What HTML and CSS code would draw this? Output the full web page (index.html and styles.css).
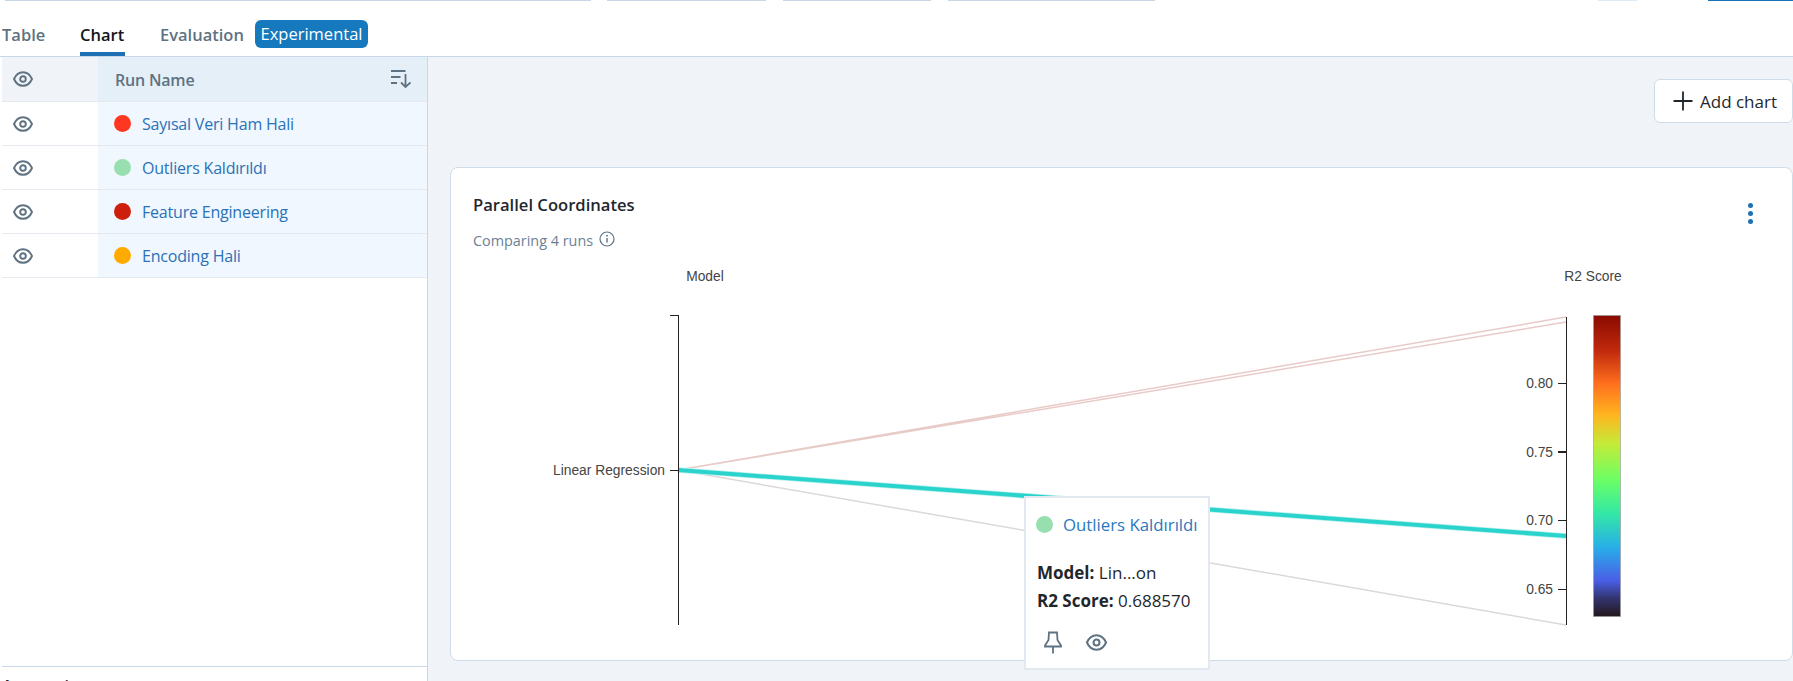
FILE: index.html
```html
<!DOCTYPE html>
<html lang="en">
<head>
    <meta charset="UTF-8">
    <meta name="viewport" content="width=device-width, initial-scale=1.0">
    <title>Chart</title>
    <link rel="stylesheet" href="styles.css">
</head>
<body>
    <svg width="0" height="0" class="defs">
        <symbol id="eye" viewBox="0 0 20 16">
            <path d="M1 8C3 3.500 6.500 1.200 10 1.200S17 3.500 19 8C17 12.500 13.500 14.800 10 14.800S3 12.500 1 8Z" fill="none" stroke="currentColor" stroke-width="1.900"/>
            <circle cx="10" cy="8" r="2.800" fill="none" stroke="currentColor" stroke-width="1.900"/>
        </symbol>
    </svg>

    <div class="strip">
        <span class="strip-seg seg-a"></span>
        <span class="strip-seg seg-b"></span>
        <span class="strip-seg seg-c"></span>
        <span class="strip-seg seg-d"></span>
        <span class="strip-seg seg-e"></span>
        <span class="strip-seg seg-f"></span>
    </div>

    <div class="tabs">
        <div class="tab tab-table">Table</div>
        <div class="tab tab-active">Chart</div>
        <div class="tab tab-eval">Evaluation</div>
        <div class="tab-pill">Experimental</div>
    </div>

    <div class="main">
        <div class="runs">
            <div class="runs-list">
                <div class="run-row run-head">
                    <div class="run-eye"><svg class="eye-icon"><use href="#eye"/></svg></div>
                    <div class="run-name">
                        <span class="run-head-label">Run Name</span>
                        <svg class="sort-icon" width="20" height="18" viewBox="0 0 20 18">
                            <path d="M0 1H14.500M0 7H9.500M0 13H6M14.500 4V17M10 12.500L14.500 17L19.500 12.500" fill="none" stroke="currentColor" stroke-width="1.800"/>
                        </svg>
                    </div>
                </div>
                <div class="run-row">
                    <div class="run-eye"><svg class="eye-icon"><use href="#eye"/></svg></div>
                    <div class="run-name"><span class="dot dot-red"></span><a class="run-link">Sayısal Veri Ham Hali</a></div>
                </div>
                <div class="run-row">
                    <div class="run-eye"><svg class="eye-icon"><use href="#eye"/></svg></div>
                    <div class="run-name"><span class="dot dot-green"></span><a class="run-link">Outliers Kaldırıldı</a></div>
                </div>
                <div class="run-row">
                    <div class="run-eye"><svg class="eye-icon"><use href="#eye"/></svg></div>
                    <div class="run-name"><span class="dot dot-darkred"></span><a class="run-link">Feature Engineering</a></div>
                </div>
                <div class="run-row">
                    <div class="run-eye"><svg class="eye-icon"><use href="#eye"/></svg></div>
                    <div class="run-name"><span class="dot dot-orange"></span><a class="run-link">Encoding Hali</a></div>
                </div>
            </div>
            <div class="runs-foot">Annotations</div>
        </div>

        <div class="charts">
            <div class="charts-bar">
                <button class="add-chart">
                    <svg width="20" height="20" viewBox="0 0 20 20"><path d="M10 0.500V19.500M0.500 10H19.500" stroke="currentColor" stroke-width="1.800"/></svg>
                    Add chart
                </button>
            </div>

            <div class="card">
                <div class="card-head">
                    <div>
                        <div class="card-title">Parallel Coordinates</div>
                        <div class="card-sub">
                            Comparing 4 runs
                            <svg width="16" height="16" viewBox="0 0 16 16" class="info-icon">
                                <circle cx="8" cy="8" r="7" fill="none" stroke="currentColor" stroke-width="1.200"/>
                                <path d="M8 7V11.500" stroke="currentColor" stroke-width="1.400"/>
                                <circle cx="8" cy="4.700" r="0.900" fill="currentColor"/>
                            </svg>
                        </div>
                    </div>
                    <div class="card-menu"><span></span><span></span><span></span></div>
                </div>

                <!-- viewBox uses page coordinates so the plot numbers are easy to check -->
                <svg class="plot" width="1341" height="400" viewBox="451 261 1341 400">
                    <defs>
                        <linearGradient id="turbo" x1="0" y1="0" x2="0" y2="1">
                            <stop offset="0" stop-color="#8a0b00"/>
                            <stop offset="0.116" stop-color="#c0290d"/>
                            <stop offset="0.226" stop-color="#ff6f1f"/>
                            <stop offset="0.33" stop-color="#ffb51f"/>
                            <stop offset="0.425" stop-color="#c5ea38"/>
                            <stop offset="0.547" stop-color="#6bff66"/>
                            <stop offset="0.657" stop-color="#33e8a5"/>
                            <stop offset="0.77" stop-color="#28aee8"/>
                            <stop offset="0.88" stop-color="#4a5fe6"/>
                            <stop offset="0.94" stop-color="#32346f"/>
                            <stop offset="1" stop-color="#23171b"/>
                        </linearGradient>
                    </defs>

                    <text class="axis-title" x="705" y="281" text-anchor="middle">Model</text>
                    <text class="axis-title" x="1593" y="281" text-anchor="middle">R2 Score</text>

                    <path d="M678 470L1566 317M678 470L1566 322" class="line-pink"/>
                    <path d="M678 470L1566 625" class="line-grey"/>
                    <path d="M678 470L1566 536" class="line-teal-halo"/>
                    <path d="M678 470L1566 536" class="line-teal"/>

                    <path d="M678.500 315V625M670 315.500H678M670 470.500H678" class="axis"/>
                    <path d="M1566.500 317V625M1558 383.500H1566M1558 520.500H1566M1558 589.500H1566" class="axis"/>
                    <path d="M1558 452H1566" class="axis axis-bold"/>

                    <text class="tick" x="665" y="475" text-anchor="end">Linear Regression</text>
                    <text class="tick" x="1553" y="388" text-anchor="end">0.80</text>
                    <text class="tick" x="1553" y="457" text-anchor="end">0.75</text>
                    <text class="tick" x="1553" y="525" text-anchor="end">0.70</text>
                    <text class="tick" x="1553" y="594" text-anchor="end">0.65</text>

                    <rect x="1593.500" y="315.500" width="27" height="301" fill="url(#turbo)" stroke="#999" stroke-opacity="0.6"/>
                </svg>

                <div class="tooltip">
                    <div class="tooltip-run"><span class="dot dot-green"></span><a class="tooltip-link">Outliers Kaldırıldı</a></div>
                    <div class="tooltip-line"><b>Model:</b> Lin...on</div>
                    <div class="tooltip-line"><b>R2 Score:</b> 0.688570</div>
                    <div class="tooltip-icons">
                        <svg width="18" height="23" viewBox="0 0 18 23">
                            <path d="M5 1.500H13L13.500 9L17 14.500V15.500H1V14.500L4.500 9ZM9 15.500V22.500" fill="none" stroke="currentColor" stroke-width="1.800"/>
                        </svg>
                        <svg class="eye-big"><use href="#eye"/></svg>
                    </div>
                </div>
            </div>
        </div>
    </div>
</body>
</html>
```

FILE: styles.css
```css
* {
    box-sizing: border-box;
}

html, body {
    margin: 0;
    height: 681px;
    overflow: hidden;
}

body {
    display: flex;
    flex-direction: column;
    background-color: white;
    color: #1f272d;
    font-family: "Open Sans", "Noto Sans", sans-serif;
    font-size: 16px;
}

.defs {
    position: absolute;
}

/* bottom edge of the toolbar scrolled away above */
.strip {
    display: flex;
    height: 1px;
    flex-shrink: 0;
}

.strip-seg {
    display: block;
    background-color: #c8d8e6;
}

.seg-a { margin-left: 5px; width: 586px; }
.seg-b { margin-left: 16px; width: 159px; }
.seg-c { margin-left: 17px; width: 148px; }
.seg-d { margin-left: 17px; width: 207px; }
.seg-e { margin-left: 443px; width: 39px; background-color: #dcebf8; }
.seg-f { margin-left: 71px; width: 85px; background-color: #1a72b8; }

.tabs {
    display: flex;
    align-items: flex-end;
    height: 56px;
    flex-shrink: 0;
    padding-left: 2px;
    border-bottom: 1px solid #c8d8e6;
    font-size: 16.500px;
}

.tab {
    height: 33px;
    line-height: 24px;
    padding-bottom: 5px;
    border-bottom: 4px solid transparent;
    color: #5f7282;
    font-weight: 600;
    white-space: nowrap;
}

.tab-table { width: 42px; margin-right: 36px; }
.tab-eval { width: 84px; margin-right: 11px; }

.tab-active {
    width: 45px;
    margin-right: 35px;
    color: #11171c;
    border-bottom-color: #1f6fb5;
}

.tab-pill {
    height: 28px;
    line-height: 28px;
    width: 113px;
    margin-bottom: 8px;
    text-align: center;
    border-radius: 6px;
    background-color: #1678bd;
    color: white;
    white-space: nowrap;
}

.main {
    display: flex;
    flex: 1;
    min-height: 0;
}

.runs {
    display: flex;
    flex-direction: column;
    width: 428px;
    flex-shrink: 0;
    padding-left: 2px;
    border-right: 1px solid #c8d8e6;
}

.runs-list {
    flex: 1;
}

.run-row {
    display: flex;
    height: 44px;
    border-bottom: 1px solid #e4eaf0;
}

.run-head {
    height: 45px;
    background-color: #f0f4f8;
    color: #5f7282;
}

.run-eye {
    display: flex;
    align-items: center;
    width: 96px;
    padding-left: 11px;
    color: #5f7282;
}

.eye-icon {
    width: 20px;
    height: 16px;
}

.run-name {
    display: flex;
    align-items: center;
    flex: 1;
    padding-left: 16px;
    background-color: #f0f7ff;
    letter-spacing: -0.2px;
}

.run-head .run-name {
    justify-content: space-between;
    padding: 0 16px 0 17px;
    background-color: #e4eff8;
    font-weight: 600;
}

.run-head-label {
    padding-top: 2px;
}

.sort-icon {
    color: #5f7282;
}

.dot {
    display: block;
    width: 17px;
    height: 17px;
    flex-shrink: 0;
    border-radius: 50%;
}

.dot-red { background-color: #ff3620; }
.dot-green { background-color: #98dfb0; }
.dot-darkred { background-color: #cd1f0b; }
.dot-orange { background-color: #ffaa00; }

.run-link {
    margin-left: 11px;
    color: #2a72b8;
}

.runs-foot {
    height: 15px;
    padding-top: 8px;
    border-top: 1px solid #c8d8e6;
    font-size: 16px;
    font-weight: 600;
    line-height: 22px;
}

.charts {
    display: flex;
    flex-direction: column;
    flex: 1;
    min-width: 0;
    padding: 22px 0 0 22px;
    background-color: #f0f4f8;
}

.charts-bar {
    display: flex;
    justify-content: flex-end;
    margin-bottom: 44px;
}

.add-chart {
    display: flex;
    align-items: center;
    gap: 7px;
    width: 139px;
    height: 44px;
    padding: 0 0 0 18px;
    border: 1px solid #cfdce8;
    border-radius: 6px;
    background-color: white;
    color: #1f272d;
    font-family: inherit;
    font-size: 17px;
    white-space: nowrap;
}

.card {
    position: relative;
    height: 494px;
    border: 1px solid #cfdce8;
    border-radius: 8px;
    background-color: white;
}

.card-head {
    display: flex;
    justify-content: space-between;
    height: 93px;
    padding: 24px 39px 0 22px;
}

.card-title {
    font-size: 16.600px;
    font-weight: 600;
    line-height: 26px;
}

.card-sub {
    display: flex;
    align-items: center;
    gap: 6px;
    margin-top: 11px;
    color: #6b7f93;
    font-size: 14.400px;
    line-height: 24px;
}

.info-icon {
    margin-bottom: 4px;
    color: #5f7282;
}

.card-menu {
    display: flex;
    flex-direction: column;
    gap: 3px;
    padding-top: 11px;
}

.card-menu span {
    display: block;
    width: 5px;
    height: 5px;
    border-radius: 50%;
    background-color: #1f6fb5;
}

.plot {
    display: block;
}

.axis-title, .tick {
    font-family: "Liberation Sans", Arial, sans-serif;
    font-size: 13.800px;
    fill: #444;
}

.axis {
    fill: none;
    stroke: #222;
    stroke-width: 1;
}

.axis-bold {
    stroke-width: 2;
}

.line-pink {
    fill: none;
    stroke: #e8cbc8;
    stroke-width: 1.500;
}

.line-grey {
    fill: none;
    stroke: #ddd8d8;
    stroke-width: 1.500;
}

.line-teal-halo {
    fill: none;
    stroke: #b8f0ec;
    stroke-width: 5.500;
}

.line-teal {
    fill: none;
    stroke: #2ad4cc;
    stroke-width: 4;
}

.tooltip {
    position: absolute;
    left: 573px;
    top: 328px;
    width: 186px;
    height: 174px;
    padding: 13px 0 0 11px;
    border: 2px solid #e2e9f0;
    background-color: white;
    font-size: 17px;
}

.tooltip-run {
    display: flex;
    align-items: center;
    height: 26px;
    margin-left: -1px;
    margin-bottom: 22px;
    font-size: 16.800px;
}

.tooltip-link {
    margin-left: 10px;
    color: #2a78c0;
    white-space: nowrap;
}

.tooltip-line {
    line-height: 28px;
    white-space: nowrap;
}

.tooltip-line b {
    font-weight: 700;
}

.tooltip-icons {
    display: flex;
    align-items: center;
    gap: 23px;
    margin-top: 16px;
    padding-left: 7px;
    color: #5f7282;
}

.eye-big {
    width: 23px;
    height: 17px;
}
```
